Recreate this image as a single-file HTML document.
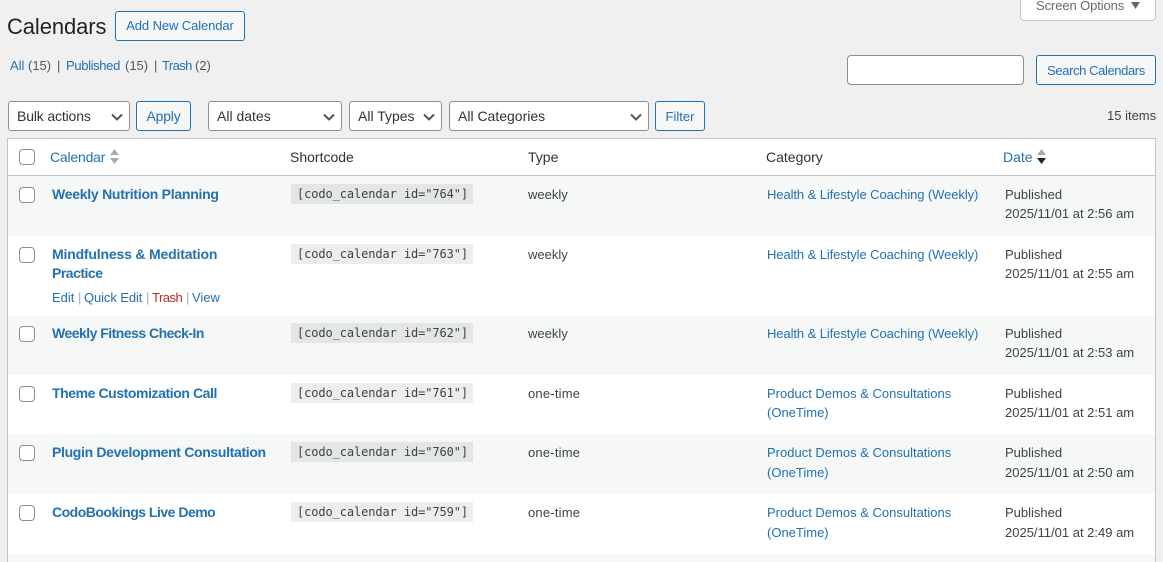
<!DOCTYPE html>
<html><head><meta charset="utf-8">
<style>
html,body{margin:0;padding:0;width:1163px;height:562px;overflow:hidden;background:#f0f0f1;font-family:"Liberation Sans",sans-serif;font-size:13px;color:#3c434a}
body{position:relative}
.t{position:absolute;white-space:nowrap;line-height:20px}
.a{color:#2271b1}
.g{color:#50575e}
.h{letter-spacing:-.085px}
.o{letter-spacing:.2px}
.b{position:absolute;box-sizing:border-box;background:#f6f7f7;border:1px solid #2271b1;border-radius:3px;color:#2271b1;text-align:center;white-space:nowrap}
.s{position:absolute;box-sizing:border-box;background:#fff;border:1px solid #8c8f94;border-radius:3px;height:30px;top:101px;line-height:28px;padding-left:8px;color:#2c3338;font-size:14px;white-space:nowrap}
.s svg{position:absolute;right:4px;top:7px}
.row{position:absolute;left:8px;width:1147px}
.c{position:absolute;left:19px;width:16px;height:16px;box-sizing:border-box;background:#fff;border:1px solid #8c8f94;border-radius:4px}
.ti{font-weight:700;font-size:14px;color:#2271b1}
.code{position:absolute;left:291px;width:182px;height:20px;background:rgba(0,0,0,.07);font:12px/20px "DejaVu Sans Mono",monospace;color:#3c434a;padding-left:6px;box-sizing:border-box;white-space:nowrap;letter-spacing:-.1px}
</style></head><body>

<div class="t" style="left:7px;top:12px;font-size:22px;line-height:29px;color:#1d2327;letter-spacing:-.1px">Calendars</div>
<div class="b" style="left:115px;top:11px;width:130px;height:30px;line-height:28px;letter-spacing:-.1px">Add New Calendar</div>

<div style="position:absolute;left:1020px;top:0;width:136px;height:21px;box-sizing:border-box;background:#fff;border:1px solid #c3c4c7;border-top:0;border-radius:0 0 4px 4px"></div>
<div class="t" style="left:1036px;top:0;height:16px;line-height:12px;color:#646970;letter-spacing:-.1px">Screen Options</div>
<svg style="position:absolute;left:1131px;top:2px" width="9" height="7"><path d="M0 0H9L4.500 7Z" fill="#646970"/></svg>

<div class="t a" style="left:10px;top:56px">All</div>
<div class="t g" style="left:28px;top:56px">(15)</div>
<div class="t g" style="left:57px;top:56px">|</div>
<div class="t a" style="left:66px;top:56px;letter-spacing:-.35px">Published</div>
<div class="t g" style="left:125px;top:56px">(15)</div>
<div class="t g" style="left:154px;top:56px">|</div>
<div class="t a" style="left:162px;top:56px;letter-spacing:-.6px">Trash</div>
<div class="t g" style="left:195px;top:56px">(2)</div>

<div style="position:absolute;left:847px;top:55px;width:177px;height:30px;box-sizing:border-box;background:#fff;border:1px solid #8c8f94;border-radius:4px"></div>
<div class="b" style="left:1036px;top:55px;width:120px;height:30px;line-height:29px;letter-spacing:-.4px">Search Calendars</div>

<div class="s" style="left:8px;width:122px;letter-spacing:-.15px">Bulk actions<svg width="16" height="16"><path d="M3 5.500L8 10.500L13 5.500" fill="none" stroke="#50575e" stroke-width="2"/></svg></div>
<div class="b" style="left:136px;top:101px;width:55px;height:30px;line-height:29px;font-size:14px;letter-spacing:-.2px">Apply</div>
<div class="s" style="left:208px;width:134px">All dates<svg width="16" height="16"><path d="M3 5.500L8 10.500L13 5.500" fill="none" stroke="#50575e" stroke-width="2"/></svg></div>
<div class="s" style="left:349px;width:93px">All Types<svg width="16" height="16"><path d="M3 5.500L8 10.500L13 5.500" fill="none" stroke="#50575e" stroke-width="2"/></svg></div>
<div class="s" style="left:449px;width:200px">All Categories<svg width="16" height="16"><path d="M3 5.500L8 10.500L13 5.500" fill="none" stroke="#50575e" stroke-width="2"/></svg></div>
<div class="b" style="left:655px;top:101px;width:50px;height:30px;line-height:29px">Filter</div>
<div class="t" style="left:1107px;top:106px">15 items</div>

<div style="position:absolute;left:7px;top:138px;width:1149px;height:424px;box-sizing:border-box;background:#fff;border:1px solid #c3c4c7;border-bottom:0"></div>
<div class="row" style="top:175px;height:1px;background:#c3c4c7"></div>
<div class="row" style="top:176px;height:60px;background:#f6f7f7"></div>
<div class="row" style="top:316px;height:59px;background:#f6f7f7"></div>
<div class="row" style="top:434px;height:60px;background:#f6f7f7"></div>
<div class="row" style="top:554px;height:8px;background:#f6f7f7"></div>

<div class="c" style="top:149px"></div>
<div class="t a" style="left:50px;top:147px;font-size:14px;letter-spacing:-.2px">Calendar</div>
<svg style="position:absolute;left:110px;top:149px" width="9" height="15"><path d="M0 6L4.500 0L9 6Z M0 9H9L4.500 15Z" fill="#a7aaad"/></svg>
<div class="t" style="left:290px;top:147px;font-size:14px;color:#2c3338">Shortcode</div>
<div class="t" style="left:528px;top:147px;font-size:14px;color:#2c3338">Type</div>
<div class="t" style="left:766px;top:147px;font-size:14px;color:#2c3338">Category</div>
<div class="t a" style="left:1003px;top:147px;font-size:14px">Date</div>
<svg style="position:absolute;left:1037px;top:149px" width="9" height="15"><path d="M0 6L4.500 0L9 6Z" fill="#a7aaad"/><path d="M0 9H9L4.500 15Z" fill="#1d2327"/></svg>

<!-- row 1 -->
<div class="c" style="top:187px"></div>
<div class="t ti" style="left:52px;top:184px;letter-spacing:-.26px">Weekly Nutrition Planning</div>
<div class="code" style="top:184px">[codo_calendar id="764"]</div>
<div class="t" style="left:528px;top:185px">weekly</div>
<div class="t a h" style="left:767px;top:185px">Health &amp; Lifestyle Coaching (Weekly)</div>
<div class="t" style="left:1005px;top:185px">Published</div>
<div class="t" style="left:1005px;top:204px">2025/11/01 at 2:56 am</div>

<!-- row 2 -->
<div class="c" style="top:247px"></div>
<div class="t ti" style="left:52px;top:244px;letter-spacing:-.18px">Mindfulness &amp; Meditation</div>
<div class="t ti" style="left:52px;top:263px;letter-spacing:-.5px">Practice</div>
<div class="t a" style="left:52px;top:288px">Edit</div>
<div class="t" style="left:78px;top:288px;color:#a7aaad">|</div>
<div class="t a" style="left:84px;top:288px;letter-spacing:-.1px">Quick Edit</div>
<div class="t" style="left:146px;top:288px;color:#a7aaad">|</div>
<div class="t" style="left:152px;top:288px;color:#b32d2e;letter-spacing:-.5px">Trash</div>
<div class="t" style="left:186px;top:288px;color:#a7aaad">|</div>
<div class="t a" style="left:192px;top:288px">View</div>
<div class="code" style="top:244px">[codo_calendar id="763"]</div>
<div class="t" style="left:528px;top:245px">weekly</div>
<div class="t a h" style="left:767px;top:245px">Health &amp; Lifestyle Coaching (Weekly)</div>
<div class="t" style="left:1005px;top:245px">Published</div>
<div class="t" style="left:1005px;top:264px">2025/11/01 at 2:55 am</div>

<!-- row 3 -->
<div class="c" style="top:326px"></div>
<div class="t ti" style="left:52px;top:323px;letter-spacing:-.52px">Weekly Fitness Check-In</div>
<div class="code" style="top:323px">[codo_calendar id="762"]</div>
<div class="t" style="left:528px;top:324px">weekly</div>
<div class="t a h" style="left:767px;top:324px">Health &amp; Lifestyle Coaching (Weekly)</div>
<div class="t" style="left:1005px;top:324px">Published</div>
<div class="t" style="left:1005px;top:343px">2025/11/01 at 2:53 am</div>

<!-- row 4 -->
<div class="c" style="top:386px"></div>
<div class="t ti" style="left:52px;top:383px;letter-spacing:-.42px">Theme Customization Call</div>
<div class="code" style="top:383px">[codo_calendar id="761"]</div>
<div class="t o" style="left:528px;top:384px">one-time</div>
<div class="t a" style="left:767px;top:384px">Product Demos &amp; Consultations</div>
<div class="t a" style="left:767px;top:403px">(OneTime)</div>
<div class="t" style="left:1005px;top:384px">Published</div>
<div class="t" style="left:1005px;top:403px">2025/11/01 at 2:51 am</div>

<!-- row 5 -->
<div class="c" style="top:445px"></div>
<div class="t ti" style="left:52px;top:442px;letter-spacing:-.33px">Plugin Development Consultation</div>
<div class="code" style="top:442px">[codo_calendar id="760"]</div>
<div class="t o" style="left:528px;top:443px">one-time</div>
<div class="t a" style="left:767px;top:443px">Product Demos &amp; Consultations</div>
<div class="t a" style="left:767px;top:463px">(OneTime)</div>
<div class="t" style="left:1005px;top:443px">Published</div>
<div class="t" style="left:1005px;top:463px">2025/11/01 at 2:50 am</div>

<!-- row 6 -->
<div class="c" style="top:505px"></div>
<div class="t ti" style="left:52px;top:502px;letter-spacing:-.5px">CodoBookings Live Demo</div>
<div class="code" style="top:502px">[codo_calendar id="759"]</div>
<div class="t o" style="left:528px;top:503px">one-time</div>
<div class="t a" style="left:767px;top:503px">Product Demos &amp; Consultations</div>
<div class="t a" style="left:767px;top:523px">(OneTime)</div>
<div class="t" style="left:1005px;top:503px">Published</div>
<div class="t" style="left:1005px;top:523px">2025/11/01 at 2:49 am</div>

</body></html>
